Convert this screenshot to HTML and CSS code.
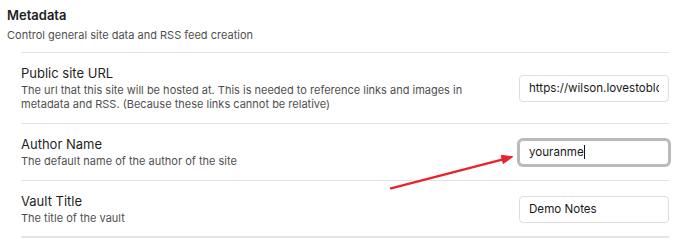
FILE: index.html
```html
<!DOCTYPE html>
<html lang="en">
<head>
<meta charset="utf-8">
<title>Metadata settings</title>
<link rel="stylesheet" href="styles.css">
</head>
<body>
<div class="page">
  <div class="section-head">
    <div class="section-title">Metadata</div>
    <div class="section-desc">Control general site data and RSS feed creation</div>
  </div>
  <div class="settings">
    <div class="setting-item">
      <div class="setting-info">
        <div class="setting-name">Public site URL</div>
        <div class="setting-desc">The url that this site will be hosted at. This is needed to reference links and images in metadata and RSS. (Because these links cannot be relative)</div>
      </div>
      <div class="text-input"><span class="text-value">https://wilson.lovestoblog.com</span></div>
    </div>
    <div class="setting-item">
      <div class="setting-info">
        <div class="setting-name">Author Name</div>
        <div class="setting-desc">The default name of the author of the site</div>
      </div>
      <div class="text-input is-focused"><span class="text-value">youranme<span class="caret"></span></span></div>
    </div>
    <div class="setting-item is-last">
      <div class="setting-info">
        <div class="setting-name">Vault Title</div>
        <div class="setting-desc">The title of the vault</div>
      </div>
      <div class="text-input"><span class="text-value">Demo Notes</span></div>
    </div>
  </div>
  <svg class="annotation" width="690" height="246" viewBox="0 0 690 246" aria-hidden="true">
    <line x1="391" y1="188.3" x2="503" y2="159.4" stroke="#e8232b" stroke-width="2.4" stroke-linecap="round"/>
    <polygon points="512.7,156.7 503.3,163.6 501.2,155.4" fill="#e8232b" stroke="#e8232b" stroke-width="1" stroke-linejoin="round"/>
  </svg>
</div>
</body>
</html>
```

FILE: styles.css
```css
html, body {
  margin: 0;
  padding: 0;
  background: #ffffff;
}

body {
  font-family: "Inter", "Noto Sans", sans-serif;
  color: #222222;
  width: 690px;
  height: 246px;
  overflow: hidden;
}

.page {
  position: relative;
  padding: 7px 21px 0 7px;
}

.section-title {
  font-size: 13px;
  line-height: 16px;
  font-weight: 600;
  color: #1e1e1e;
}

.section-desc {
  margin-top: 5px;
  font-size: 11px;
  line-height: 14px;
  color: #4f4f4f;
}

.settings {
  margin-top: 10px;
  margin-left: 14px;
}

.setting-item {
  display: flex;
  align-items: center;
  gap: 40px;
  padding: 12px 0;
  border-top: 1px solid #e2e2e2;
}

.setting-item.is-last {
  border-bottom: 2px solid #e6e6e6;
  padding-bottom: 11px;
}

.setting-info {
  flex: 1;
  min-width: 0;
}

.setting-name {
  font-size: 13px;
  line-height: 16px;
  color: #1f1f1f;
}

.setting-desc {
  margin-top: 2px;
  font-size: 11px;
  line-height: 14px;
  color: #4f4f4f;
}

.text-input {
  flex: none;
  box-sizing: border-box;
  width: 150px;
  height: 27px;
  padding: 0 9px;
  display: flex;
  align-items: center;
  background: #ffffff;
  border: 1px solid #dedede;
  border-radius: 4px;
  font-size: 11.6px;
  color: #1a1a1a;
}

.text-input.is-focused {
  border-color: #b9b9b9;
  box-shadow: 0 0 0 2px #b9b9b9;
  height: 25px;
}

.text-value {
  display: block;
  overflow: hidden;
  white-space: nowrap;
  width: 100%;
}

.caret {
  display: inline-block;
  width: 1px;
  height: 14px;
  background: #111111;
  vertical-align: -3px;
}

.annotation {
  position: absolute;
  left: 0;
  top: 0;
  pointer-events: none;
}
```
